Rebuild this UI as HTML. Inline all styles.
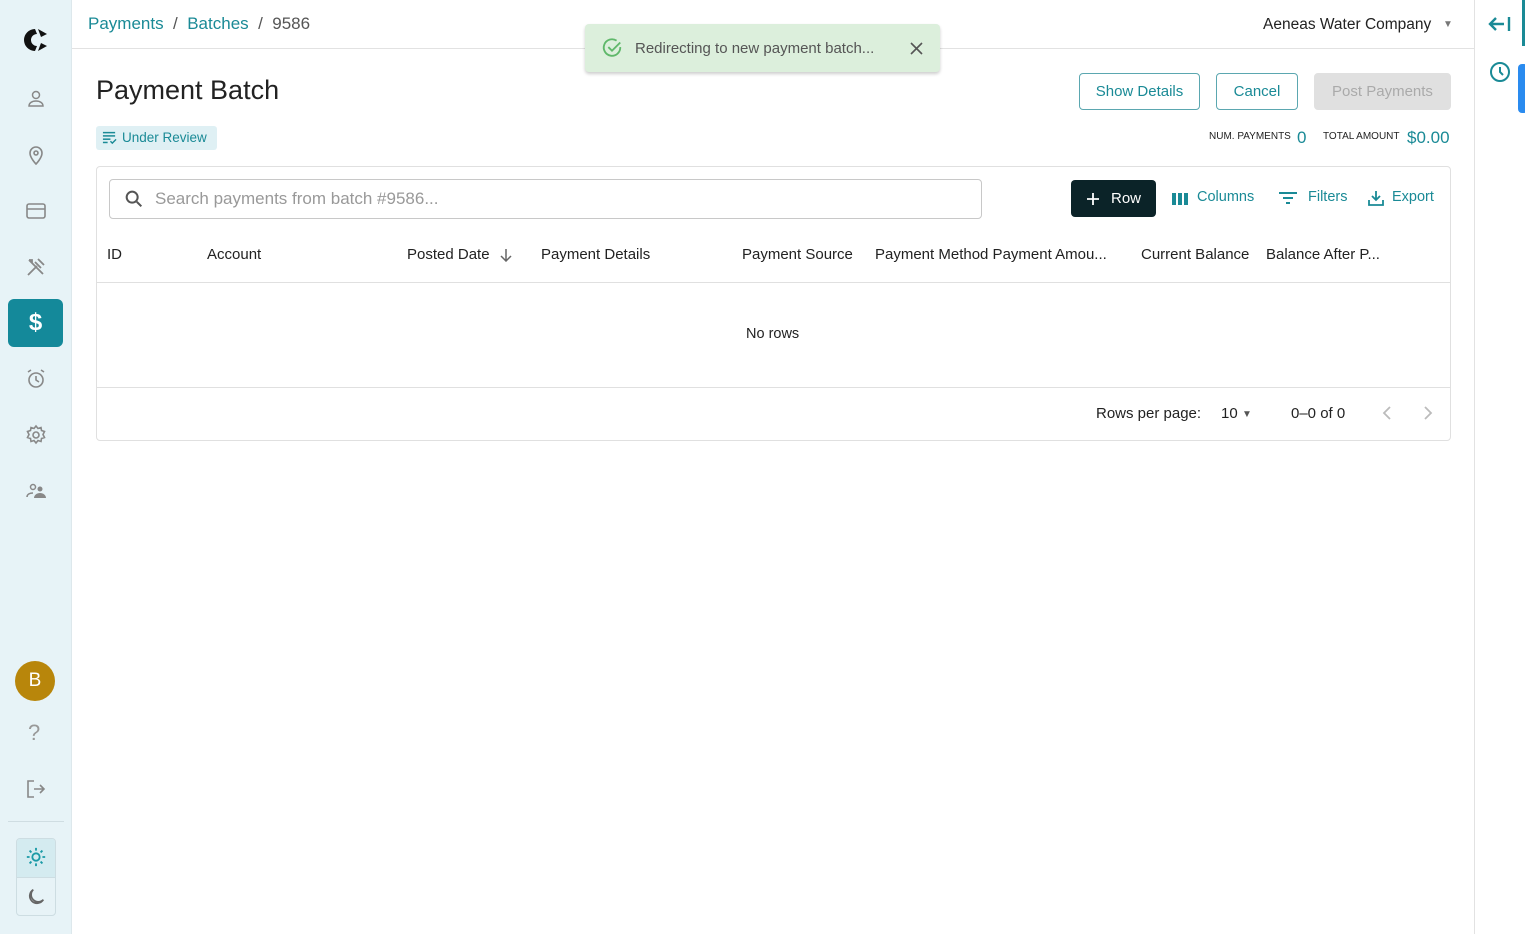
<!DOCTYPE html>
<html><head><meta charset="utf-8"><style>
*{box-sizing:border-box;margin:0;padding:0}
body{width:1525px;height:934px;position:relative;font-family:"Liberation Sans",sans-serif;background:#fff;overflow:hidden;color:#222}
.abs{position:absolute}
.side{left:0;top:0;width:72px;height:934px;background:#e7f3f7;border-right:1px solid #dde8ec}
.ic{position:absolute;left:24px;width:24px;height:24px}
.teal{color:#1a8a96}
.btn{position:absolute;height:37px;border:1px solid #5ba7b0;border-radius:4px;color:#1a8a96;font-size:15px;display:flex;align-items:center;justify-content:center}
.th{position:absolute;top:246px;font-size:15px;color:#222}
.tb{position:absolute;top:189px;font-size:14.5px;color:#1a8a96}
</style></head><body>
<div class="abs side"></div>
<svg class="abs" style="left:22px;top:26px" width="28" height="28" viewBox="0 0 28 28"><path d="M13 3 A11 11 0 0 0 13 25 L15 20 A6 6 0 0 1 15 8Z" fill="#111"/><path d="M16 3 L25 8 L19 11Z M16 25 L25 20 L19 17Z" fill="#111"/></svg>
<svg class="ic" style="top:87px" viewBox="0 0 24 24" fill="none" stroke="#888" stroke-width="1.5"><circle cx="12" cy="8" r="3.5"/><path d="M5 19c0-3 3-5 7-5s7 2 7 5z"/></svg>
<svg class="ic" style="top:143px" viewBox="0 0 24 24" fill="none" stroke="#888" stroke-width="1.6"><path d="M12 21s-6-6-6-11a6 6 0 0112 0c0 5-6 11-6 11z"/><circle cx="12" cy="10" r="2"/></svg>
<svg class="ic" style="top:199px" viewBox="0 0 24 24" fill="none" stroke="#888" stroke-width="1.6"><rect x="3" y="5" width="18" height="14" rx="2"/><path d="M3 10h18"/></svg>
<svg class="ic" style="top:255px" viewBox="0 0 24 24" fill="none" stroke="#888" stroke-width="1.8"><path d="M4 20l9-9M14 4l6 6M11 7l6 6M5 5l14 14M5 5l3 0 0 3"/></svg>
<div class="abs" style="left:8px;top:299px;width:55px;height:48px;background:#14899a;border-radius:6px;color:#fff;font-size:24px;font-weight:bold;text-align:center;line-height:48px">$</div>
<svg class="ic" style="top:367px" viewBox="0 0 24 24" fill="none" stroke="#888" stroke-width="1.6"><circle cx="12" cy="13" r="7"/><path d="M12 9v4l3 2M4 5l3-2M20 5l-3-2"/></svg>
<svg class="ic" style="top:423px" viewBox="0 0 24 24" fill="none" stroke="#888" stroke-width="1.6"><circle cx="12" cy="12" r="3"/><path d="M12 3l2 2.5 3-1 .5 3 3 1-1.5 3 1.5 3-3 1-.5 3-3-1-2 2.5-2-2.5-3 1-.5-3-3-1 1.5-3-1.5-3 3-1 .5-3 3 1z"/></svg>
<svg class="ic" style="top:479px" viewBox="0 0 24 24" fill="#888"><circle cx="9" cy="8" r="2.5" fill="none" stroke="#888" stroke-width="1.5"/><path d="M3 18c0-3 3-4 6-4" fill="none" stroke="#888" stroke-width="1.5"/><circle cx="16" cy="10" r="2.5"/><path d="M10 19c0-3 3-5 6-5s6 2 6 5z"/></svg>
<div class="abs" style="left:15px;top:661px;width:40px;height:40px;border-radius:50%;background:#b8860b;color:#fff;font-size:19px;text-align:center;line-height:40px">B</div>
<div class="abs" style="left:28px;top:720px;font-size:22px;color:#999">?</div>
<svg class="ic" style="top:777px" viewBox="0 0 24 24" fill="none" stroke="#888" stroke-width="1.6"><path d="M10 4H4v16h6M10 12h10M16 8l4 4-4 4"/></svg>
<div class="abs" style="left:8px;top:821px;width:56px;height:1px;background:#cfdde2"></div>
<div class="abs" style="left:16px;top:838px;width:40px;height:78px;border:1px solid #cddde2;border-radius:4px;overflow:hidden"><div style="height:39px;background:#d4ebf0;border-bottom:1px solid #cddde2"></div></div>
<svg class="abs" style="left:25px;top:846px" width="22" height="22" viewBox="0 0 24 24" fill="none" stroke="#1a9aa6" stroke-width="2"><circle cx="12" cy="12" r="4"/><path d="M12 2v3M12 19v3M2 12h3M19 12h3M5 5l2 2M17 17l2 2M5 19l2-2M17 7l2-2"/></svg>
<svg class="abs" style="left:25px;top:886px" width="22" height="22" viewBox="0 0 24 24" fill="none" stroke="#666" stroke-width="1.8"><path d="M20 15A8 8 0 119 4a7 7 0 0011 11z"/></svg>

<div class="abs" style="left:72px;top:48px;width:1402px;height:1px;background:#e2e2e2"></div>
<div class="abs" style="left:88px;top:14px;font-size:17px;color:#555"><span class="teal">Payments</span> &nbsp;/&nbsp; <span class="teal">Batches</span> &nbsp;/&nbsp; 9586</div>
<div class="abs" style="left:1263px;top:16px;font-size:15.5px;color:#222">Aeneas Water Company</div>
<div class="abs" style="left:1443px;top:19px;font-size:10px;color:#777">&#9660;</div>
<div class="abs" style="left:1474px;top:0;width:51px;height:934px;background:#fff;border-left:1px solid #e2e2e2"></div>
<svg class="abs" style="left:1488px;top:14px" width="24" height="20" viewBox="0 0 24 20" fill="none" stroke="#1a8a96" stroke-width="2.4"><path d="M2 10h14M8 4l-6 6 6 6M21 3v14"/></svg>
<div class="abs" style="left:1522px;top:0;width:3px;height:46px;background:#1a8a96"></div>
<svg class="abs" style="left:1488px;top:60px" width="24" height="24" viewBox="0 0 24 24" fill="none" stroke="#1a8a96" stroke-width="2"><circle cx="12" cy="12" r="9"/><path d="M12 7v5l3 3"/></svg>
<div class="abs" style="left:1518px;top:64px;width:10px;height:49px;background:#2a8bef;border-radius:4px"></div>

<div class="abs" style="left:585px;top:24px;width:355px;height:48px;background:#dcefdc;border-radius:4px;box-shadow:0 2px 3px rgba(0,0,0,.2)"></div>
<svg class="abs" style="left:601px;top:37px" width="22" height="22" viewBox="0 0 24 24" fill="none" stroke="#5fb86a" stroke-width="2"><path d="M21 11a9 9 0 11-4-7"/><path d="M8 11l4 4 9-9"/></svg>
<div class="abs" style="left:635px;top:40px;font-size:15px;color:#555">Redirecting to new payment batch...</div>
<svg class="abs" style="left:910px;top:42px" width="13" height="13" viewBox="0 0 13 13" stroke="#555" stroke-width="1.6"><path d="M1 1l11 11M12 1L1 12"/></svg>

<div class="abs" style="left:96px;top:75px;font-size:27px;color:#222">Payment Batch</div>
<div class="abs" style="left:96px;top:126px;width:121px;height:24px;background:#dff0f4;border-radius:3px;font-size:13.5px;color:#1a8a96;line-height:24px;padding-left:26px">Under Review</div>
<svg class="abs" style="left:102px;top:130px" width="15" height="15" viewBox="0 0 16 16" fill="#1a8a96"><rect x="1" y="2" width="13" height="1.6"/><rect x="1" y="5.5" width="13" height="1.6"/><rect x="1" y="9" width="8" height="1.6"/><rect x="1" y="12.5" width="5" height="1.6"/><path d="M9 12l2 2 4-4" stroke="#1a8a96" fill="none" stroke-width="1.5"/></svg>
<div class="btn" style="left:1079px;top:73px;width:121px">Show Details</div>
<div class="btn" style="left:1216px;top:73px;width:82px">Cancel</div>
<div class="btn" style="left:1314px;top:73px;width:137px;background:#e0e0e0;border-color:#e0e0e0;color:#aaa">Post Payments</div>
<div class="abs" style="left:1209px;top:131px;font-size:10px;color:#222">NUM. PAYMENTS</div>
<div class="abs" style="left:1297px;top:128px;font-size:17px;color:#1a8a96">0</div>
<div class="abs" style="left:1323px;top:131px;font-size:10px;color:#222">TOTAL AMOUNT</div>
<div class="abs" style="left:1407px;top:128px;font-size:17px;color:#1a8a96">$0.00</div>

<div class="abs" style="left:96px;top:166px;width:1355px;height:275px;border:1px solid #e0e0e0;border-radius:4px"></div>
<div class="abs" style="left:109px;top:179px;width:873px;height:40px;border:1px solid #c8c8c8;border-radius:4px"></div>
<svg class="abs" style="left:123px;top:188px" width="22" height="22" viewBox="0 0 24 24" fill="none" stroke="#555" stroke-width="2.2"><circle cx="10" cy="10" r="6"/><path d="M15 15l5 5"/></svg>
<div class="abs" style="left:155px;top:189px;font-size:17px;color:#999">Search payments from batch #9586...</div>
<div class="abs" style="left:1071px;top:180px;width:85px;height:37px;background:#0b2328;border-radius:4px"></div>
<svg class="abs" style="left:1086px;top:192px" width="14" height="14" viewBox="0 0 14 14" stroke="#fff" stroke-width="1.8"><path d="M7 1v12M1 7h12"/></svg>
<div class="abs" style="left:1111px;top:190px;font-size:15px;color:#fff">Row</div>
<svg class="abs" style="left:1172px;top:193px" width="16" height="12" viewBox="0 0 16 12" fill="#1a8a96"><rect x="0" y="0" width="4" height="12"/><rect x="6" y="0" width="4" height="12"/><rect x="12" y="0" width="4" height="12"/></svg>
<div class="tb" style="left:1197px">Columns</div>
<svg class="abs" style="left:1279px;top:191px" width="18" height="14" viewBox="0 0 18 14" stroke="#1a8a96" stroke-width="2"><path d="M0 2h18M4 7h10M7 12h4"/></svg>
<div class="tb" style="left:1308px">Filters</div>
<svg class="abs" style="left:1368px;top:190px" width="16" height="16" viewBox="0 0 16 16" fill="none" stroke="#1a8a96" stroke-width="1.8"><path d="M8 1v9M4 6l4 4 4-4M1 10v5h14v-5"/></svg>
<div class="tb" style="left:1392px">Export</div>
<div class="th" style="left:107px">ID</div>
<div class="th" style="left:207px">Account</div>
<div class="th" style="left:407px">Posted Date</div>
<svg class="abs" style="left:499px;top:248px" width="14" height="14" viewBox="0 0 14 14" fill="none" stroke="#666" stroke-width="1.5"><path d="M7 1v12M2 8l5 5 5-5"/></svg>
<div class="th" style="left:541px">Payment Details</div>
<div class="th" style="left:742px">Payment Source</div>
<div class="th" style="left:875px">Payment Method Payment Amou...</div>
<div class="th" style="left:1141px">Current Balance</div>
<div class="th" style="left:1266px">Balance After P...</div>
<div class="abs" style="left:97px;top:282px;width:1353px;height:1px;background:#e0e0e0"></div>
<div class="abs" style="left:746px;top:326px;font-size:14.5px">No rows</div>
<div class="abs" style="left:97px;top:387px;width:1353px;height:1px;background:#e0e0e0"></div>
<div class="abs" style="left:1096px;top:405px;font-size:15px">Rows per page:</div>
<div class="abs" style="left:1221px;top:405px;font-size:15px">10</div>
<div class="abs" style="left:1242px;top:409px;font-size:10px;color:#555">&#9660;</div>
<div class="abs" style="left:1291px;top:405px;font-size:15px">0–0 of 0</div>
<svg class="abs" style="left:1382px;top:406px" width="10" height="14" viewBox="0 0 10 14" fill="none" stroke="#bbb" stroke-width="1.8"><path d="M8 1L2 7l6 6"/></svg>
<svg class="abs" style="left:1423px;top:406px" width="10" height="14" viewBox="0 0 10 14" fill="none" stroke="#bbb" stroke-width="1.8"><path d="M2 1l6 6-6 6"/></svg>
</body></html>
